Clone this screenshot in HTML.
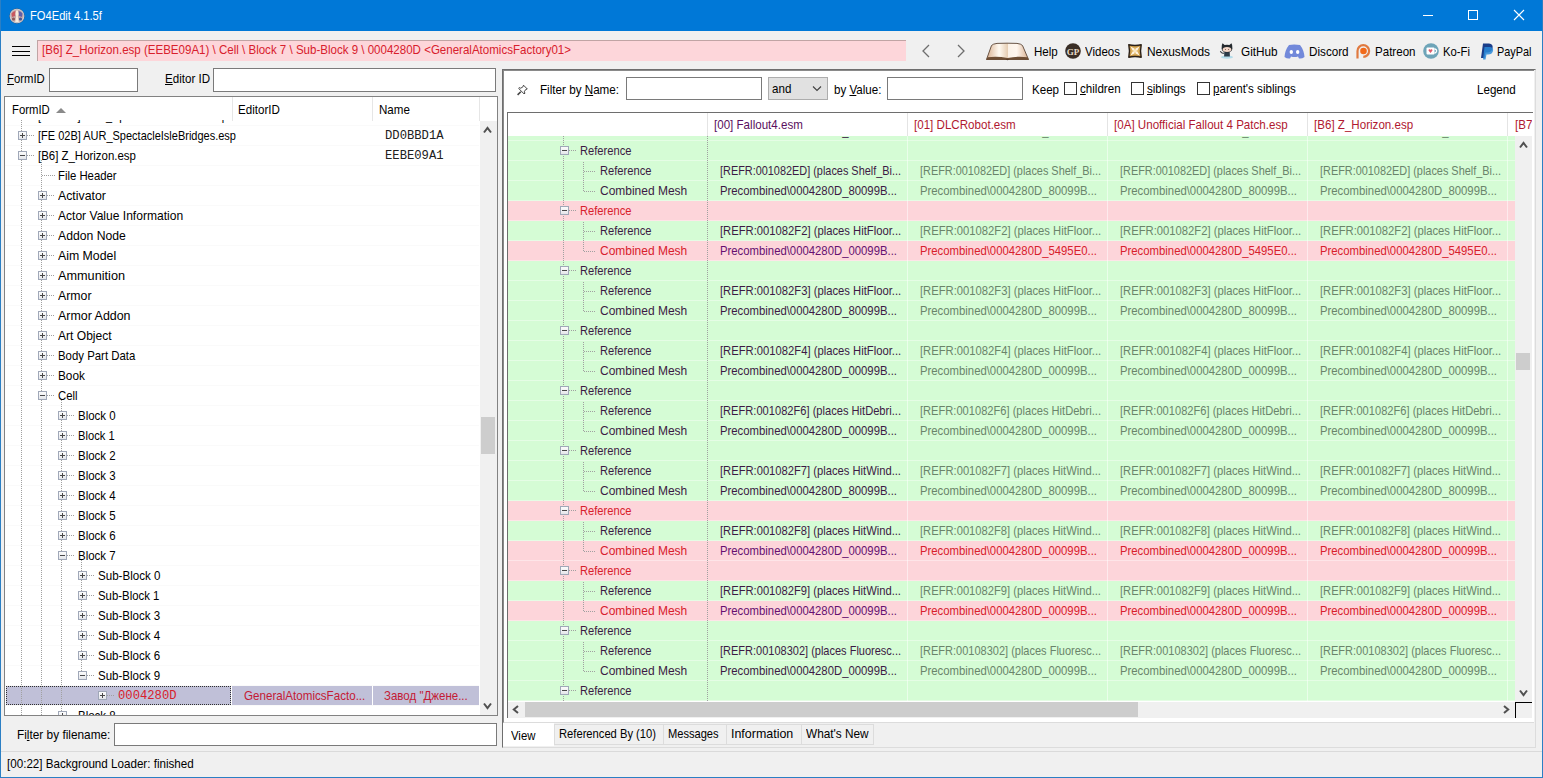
<!DOCTYPE html><html><head><meta charset="utf-8"><style>
*{box-sizing:border-box;margin:0;padding:0}
html,body{width:1543px;height:778px;overflow:hidden;background:#f0f0f0;font-family:"Liberation Sans",sans-serif;font-size:12.4px;color:#000}
.a{position:absolute}
.t{position:absolute;white-space:nowrap;line-height:14px;transform:scaleX(.935);transform-origin:0 0}
.m{font-family:"Liberation Mono",monospace;font-size:12.2px}
.t.m{transform:none}
.inp{position:absolute;background:#fff;border:1px solid #7a7a7a}
.u{text-decoration:underline;text-underline-offset:1px}
.vd{position:absolute;width:1px;background-image:linear-gradient(#a0a0a0 50%,transparent 50%);background-size:1px 2px}
.hd{position:absolute;height:1px;background-image:linear-gradient(90deg,#a0a0a0 50%,transparent 50%);background-size:2px 1px}
.bx{position:absolute;width:9px;height:9px;border:1px solid #a0a8b8;background:linear-gradient(#fcfcfc,#e4e6ea)}
.bx:before{content:"";position:absolute;left:1px;top:3px;width:5px;height:1px;background:#484848}
.bx.p:after{content:"";position:absolute;left:3px;top:1px;width:1px;height:5px;background:#484848}
.clip{position:absolute;overflow:hidden}
</style></head><body>
<div class="a" style="left:0;top:0;width:1543px;height:31px;background:#0078d7"></div>
<div class="a" style="left:0;top:0;width:1px;height:778px;background:#2b7fc4"></div>
<div class="a" style="left:1542px;top:0;width:1px;height:778px;background:#2b7fc4"></div>
<div class="a" style="left:0;top:777px;width:1543px;height:1px;background:#2b7fc4"></div>
<svg class="a" style="left:9px;top:8px" width="16" height="16" viewBox="0 0 16 16"><circle cx="8" cy="8" r="7.6" fill="#4a4a58"/><circle cx="8" cy="8" r="6.8" fill="#c8a8a8" stroke="#c8ccd4" stroke-width="1.1"/><path d="M2.5 5.5 Q4 3 6.5 3 L6 8 L3 9Z" fill="#c85860"/><path d="M13.5 5.5 Q12 3 9.5 3 L10 8 L13 9Z" fill="#6060a8"/><circle cx="4.5" cy="11" r="1.6" fill="#905858"/><circle cx="11.5" cy="11" r="1.6" fill="#485890"/><path d="M7 2.5 L9 2.5 L9.5 6 L8.8 8 L9.8 14 L6.2 14 L7.2 8 L6.5 6Z" fill="#f8ecdc"/></svg>
<div class="t" style="left:30px;top:9px;color:#fff;transform:scaleX(.9)">FO4Edit 4.1.5f</div>
<div class="a" style="left:1423px;top:15px;width:10px;height:1px;background:#fff"></div>
<div class="a" style="left:1468px;top:10px;width:10px;height:10px;border:1px solid #fff"></div>
<svg class="a" style="left:1513px;top:9px" width="12" height="12"><path d="M1 1L11 11M11 1L1 11" stroke="#fff" stroke-width="1.1"/></svg>
<div class="a" style="left:12px;top:46px;width:18px;height:1px;background:#000"></div>
<div class="a" style="left:12px;top:51px;width:18px;height:1px;background:#000"></div>
<div class="a" style="left:12px;top:55px;width:18px;height:1px;background:#000"></div>
<div class="a" style="left:37px;top:40px;width:869px;height:21px;background:#fdd6da;border-top:1px solid #c0a4a4;border-left:1px solid #c0a4a4"></div>
<div class="t" style="left:42px;top:43px;color:#d8202c;transform:scaleX(0.931)">[B6] Z_Horizon.esp (EEBE09A1) \ Cell \ Block 7 \ Sub-Block 9 \ 0004280D &lt;GeneralAtomicsFactory01&gt;</div>
<svg class="a" style="left:920px;top:43px" width="14" height="16"><path d="M9 2L3 8L9 14" fill="none" stroke="#6e6e6e" stroke-width="1.3"/></svg>
<svg class="a" style="left:954px;top:43px" width="14" height="16"><path d="M4 2L10 8L4 14" fill="none" stroke="#6e6e6e" stroke-width="1.3"/></svg>
<svg class="a" style="left:982px;top:38px" width="50" height="26" viewBox="0 0 50 26">
<defs><linearGradient id="bk" x1="0" x2="1" y1="0" y2="0"><stop offset="0" stop-color="#d8b090"/><stop offset=".3" stop-color="#fffaf2"/><stop offset=".5" stop-color="#e6ceb4"/><stop offset=".52" stop-color="#fbf2e8"/><stop offset=".72" stop-color="#fff6ee"/><stop offset="1" stop-color="#d8b090"/></linearGradient></defs>
<path d="M4.5 21.5 L9.5 7.5 Q11 5.8 15 5.4 L25 5.2 L35 5.4 Q39 5.8 40.5 7.5 L46.5 21.5 Z" fill="url(#bk)" stroke="#5a4434" stroke-width="0.9"/>
<path d="M4.2 21.8 L5.5 19.3 Q15 17.8 25.5 20 Q36 17.8 45.5 19.3 L46.8 21.8 Z" fill="#6e4e34"/>
<path d="M23.5 21.5 L25.5 22.3 L27.5 21.5 Z" fill="#3a2414"/>
</svg>
<div class="t" style="left:1034px;top:45px;transform:scaleX(0.934)">Help</div>
<svg class="a" style="left:1065px;top:43px" width="16" height="16"><circle cx="8" cy="8" r="7.8" fill="#3a2e26"/><text x="8" y="11.5" font-family="Liberation Serif" font-size="9" fill="#e8dcc8" text-anchor="middle" font-weight="bold">GP</text></svg>
<div class="t" style="left:1085px;top:45px;transform:scaleX(0.929)">Videos</div>
<svg class="a" style="left:1127px;top:43px" width="16" height="16" viewBox="0 0 16 16"><defs><radialGradient id="nx" cx=".5" cy=".5" r=".6"><stop offset="0" stop-color="#f8d890"/><stop offset="1" stop-color="#b88028"/></radialGradient></defs><path d="M1.8 1.8 Q8 3.2 14.2 1.8 Q12.8 8 14.2 14.2 Q8 12.8 1.8 14.2 Q3.2 8 1.8 1.8Z" fill="url(#nx)" stroke="#2a2018" stroke-width="1.4" stroke-linejoin="round"/><path d="M3.2 3.2 L7.2 5.6 L8 8 L5.6 7.2Z M12.8 3.2 L10.4 7.2 L8 8 L8.8 5.6Z M12.8 12.8 L8.8 10.4 L8 8 L10.4 8.8Z M3.2 12.8 L5.6 8.8 L8 8 L7.2 10.4Z" fill="#fff4e4"/></svg>
<div class="t" style="left:1147px;top:45px;transform:scaleX(0.963)">NexusMods</div>
<svg class="a" style="left:1219px;top:42px" width="16" height="17" viewBox="0 0 16 17"><ellipse cx="8" cy="15.2" rx="6" ry="1.6" fill="#b4dcea"/><path d="M5.3 10 L10.7 10 L10.9 14.6 L5.1 14.6Z" fill="#2c3c4a"/><path d="M5.2 11 Q2.2 11.8 1.4 9.2" fill="none" stroke="#30363c" stroke-width="1.1"/><path d="M2.6 6.8 Q2.2 3 3.6 1.3 L5.6 3 Q8 2.3 10.4 3 L12.4 1.3 Q13.8 3 13.4 6.8 Q13 10.5 8 10.5 Q3 10.5 2.6 6.8Z" fill="#24292e"/><ellipse cx="8" cy="7.4" rx="4.3" ry="2.5" fill="#f2d6c8"/><circle cx="6.4" cy="7.5" r=".55" fill="#6a4a40"/><circle cx="9.6" cy="7.5" r=".55" fill="#6a4a40"/></svg>
<div class="t" style="left:1241px;top:45px;transform:scaleX(0.949)">GitHub</div>
<svg class="a" style="left:1284px;top:44px" width="21" height="15" viewBox="0 0 21 15"><path d="M5 1 Q10 0 16 1 Q20 6 20.5 13 Q18 15 15 14.5 L14 12.5 Q10.5 13.5 7 12.5 L6 14.5 Q3 15 0.5 13 Q1 6 5 1 Z" fill="#7289da"/><ellipse cx="7.3" cy="8" rx="1.7" ry="1.9" fill="#fff"/><ellipse cx="13.7" cy="8" rx="1.7" ry="1.9" fill="#fff"/></svg>
<div class="t" style="left:1309px;top:45px;transform:scaleX(0.943)">Discord</div>
<svg class="a" style="left:1355px;top:43px" width="16" height="16"><path d="M2.5 15.5 L2.5 8 A5.8 5.8 0 1 1 8.3 13.8" fill="none" stroke="#e07a40" stroke-width="2.2"/><circle cx="8.5" cy="8" r="3.3" fill="#f26a1a"/></svg>
<div class="t" style="left:1375px;top:45px;transform:scaleX(0.933)">Patreon</div>
<svg class="a" style="left:1423px;top:43px" width="16" height="16"><circle cx="8" cy="8" r="7.8" fill="#6ea4b8"/><rect x="3.5" y="4.5" width="8" height="7" rx="1" fill="#fff"/><path d="M11.5 6 Q14 6 13.5 8.5 Q13 10 11.5 10" fill="none" stroke="#fff" stroke-width="1.3"/><path d="M7.5 10 L5.5 7.5 Q5.5 6 7 6.3 L7.5 7 L8 6.3 Q9.5 6 9.5 7.5 Z" fill="#e05a6a"/></svg>
<div class="t" style="left:1443px;top:45px;transform:scaleX(0.912)">Ko-Fi</div>
<svg class="a" style="left:1480px;top:43px" width="14" height="17" viewBox="0 0 14 17"><path d="M3 0.5 L9 0.5 Q13.5 1 12.5 5.5 Q11.5 9.5 7 9.5 L5.5 9.5 L4.5 15 L1 15 Z" fill="#1a3e8a"/><path d="M4.5 4 L10 4 Q13.8 4.5 13 8 Q12 11.5 8 11.5 L6.5 11.5 L5.5 16.5 L3 16.5 Z" fill="#2a8ad8" opacity="0.85"/></svg>
<div class="t" style="left:1497px;top:45px;transform:scaleX(0.879)">PayPal</div>
<div class="t" style="left:7px;top:72px;transform:scaleX(0.913)"><span class="u">F</span>ormID</div>
<div class="inp" style="left:49px;top:68px;width:89px;height:24px"></div>
<div class="t" style="left:165px;top:72px"><span class="u">E</span>ditor ID</div>
<div class="inp" style="left:213px;top:68px;width:283px;height:24px"></div>
<div class="a" style="left:4px;top:96px;width:494px;height:620px;background:#fff;border:1px solid #828282"></div>
<div class="t" style="left:12px;top:103px;transform:scaleX(0.913)">FormID</div>
<svg class="a" style="left:56px;top:107px" width="10" height="6"><path d="M0 6L5 1L10 6Z" fill="#8a8a8a"/></svg>
<div class="t" style="left:238px;top:103px">EditorID</div>
<div class="t" style="left:379px;top:103px">Name</div>
<div class="a" style="left:232px;top:97px;width:1px;height:24px;background:#e6e6e6"></div>
<div class="a" style="left:372px;top:97px;width:1px;height:24px;background:#e6e6e6"></div>
<div class="a" style="left:479px;top:97px;width:1px;height:24px;background:#e6e6e6"></div>
<div class="clip" style="left:5px;top:120px;width:474px;height:595px">
<div class="a" style="left:1px;top:566px;width:225px;height:19px;background:#c0c0d8;outline:1px dotted #303030;outline-offset:-1px"></div>
<div class="a" style="left:227px;top:566px;width:140px;height:19px;background:#c0c0d8"></div>
<div class="a" style="left:368px;top:566px;width:106px;height:19px;background:#c0c0d8"></div>
<div class="a" style="left:0;top:-15px;width:474px;height:1px;background:#fafafa"></div>
<div class="a" style="left:0;top:5px;width:474px;height:1px;background:#fafafa"></div>
<div class="a" style="left:0;top:25px;width:474px;height:1px;background:#fafafa"></div>
<div class="a" style="left:0;top:45px;width:474px;height:1px;background:#fafafa"></div>
<div class="a" style="left:0;top:65px;width:474px;height:1px;background:#fafafa"></div>
<div class="a" style="left:0;top:85px;width:474px;height:1px;background:#fafafa"></div>
<div class="a" style="left:0;top:105px;width:474px;height:1px;background:#fafafa"></div>
<div class="a" style="left:0;top:125px;width:474px;height:1px;background:#fafafa"></div>
<div class="a" style="left:0;top:145px;width:474px;height:1px;background:#fafafa"></div>
<div class="a" style="left:0;top:165px;width:474px;height:1px;background:#fafafa"></div>
<div class="a" style="left:0;top:185px;width:474px;height:1px;background:#fafafa"></div>
<div class="a" style="left:0;top:205px;width:474px;height:1px;background:#fafafa"></div>
<div class="a" style="left:0;top:225px;width:474px;height:1px;background:#fafafa"></div>
<div class="a" style="left:0;top:245px;width:474px;height:1px;background:#fafafa"></div>
<div class="a" style="left:0;top:265px;width:474px;height:1px;background:#fafafa"></div>
<div class="a" style="left:0;top:285px;width:474px;height:1px;background:#fafafa"></div>
<div class="a" style="left:0;top:305px;width:474px;height:1px;background:#fafafa"></div>
<div class="a" style="left:0;top:325px;width:474px;height:1px;background:#fafafa"></div>
<div class="a" style="left:0;top:345px;width:474px;height:1px;background:#fafafa"></div>
<div class="a" style="left:0;top:365px;width:474px;height:1px;background:#fafafa"></div>
<div class="a" style="left:0;top:385px;width:474px;height:1px;background:#fafafa"></div>
<div class="a" style="left:0;top:405px;width:474px;height:1px;background:#fafafa"></div>
<div class="a" style="left:0;top:425px;width:474px;height:1px;background:#fafafa"></div>
<div class="a" style="left:0;top:445px;width:474px;height:1px;background:#fafafa"></div>
<div class="a" style="left:0;top:465px;width:474px;height:1px;background:#fafafa"></div>
<div class="a" style="left:0;top:485px;width:474px;height:1px;background:#fafafa"></div>
<div class="a" style="left:0;top:505px;width:474px;height:1px;background:#fafafa"></div>
<div class="a" style="left:0;top:525px;width:474px;height:1px;background:#fafafa"></div>
<div class="a" style="left:0;top:545px;width:474px;height:1px;background:#fafafa"></div>
<div class="a" style="left:0;top:565px;width:474px;height:1px;background:#fafafa"></div>
<div class="a" style="left:0;top:585px;width:474px;height:1px;background:#fafafa"></div>
<div class="a" style="left:0;top:605px;width:474px;height:1px;background:#fafafa"></div>
<div class="vd" style="left:16px;top:0;height:595px"></div>
<div class="vd" style="left:36px;top:40px;height:560px"></div>
<div class="vd" style="left:56px;top:280px;height:320px"></div>
<div class="vd" style="left:76px;top:440px;height:115px"></div>
<div class="bx p" style="left:13px;top:-9px"></div>
<div class="hd" style="left:22px;top:-5px;width:8px"></div>
<div class="t" style="left:33px;top:-11px;transform:scaleX(0.881)">[FE 02A] AUR_SpectacleIsleDocks.esp</div>
<div class="t m" style="left:380px;top:-11px;color:#202020">DD0BBD19</div>
<div class="bx p" style="left:13px;top:11px"></div>
<div class="hd" style="left:22px;top:15px;width:8px"></div>
<div class="t" style="left:33px;top:9px;transform:scaleX(0.887)">[FE 02B] AUR_SpectacleIsleBridges.esp</div>
<div class="t m" style="left:380px;top:9px;color:#202020">DD0BBD1A</div>
<div class="bx " style="left:13px;top:31px"></div>
<div class="hd" style="left:22px;top:35px;width:8px"></div>
<div class="t" style="left:33px;top:29px;transform:scaleX(0.923)">[B6] Z_Horizon.esp</div>
<div class="t m" style="left:380px;top:29px;color:#202020">EEBE09A1</div>
<div class="hd" style="left:37px;top:55px;width:13px"></div>
<div class="t" style="left:53px;top:49px;transform:scaleX(0.915)">File Header</div>
<div class="bx p" style="left:33px;top:71px"></div>
<div class="hd" style="left:42px;top:75px;width:8px"></div>
<div class="t" style="left:53px;top:69px;transform:scaleX(0.992)">Activator</div>
<div class="bx p" style="left:33px;top:91px"></div>
<div class="hd" style="left:42px;top:95px;width:8px"></div>
<div class="t" style="left:53px;top:89px;transform:scaleX(0.973)">Actor Value Information</div>
<div class="bx p" style="left:33px;top:111px"></div>
<div class="hd" style="left:42px;top:115px;width:8px"></div>
<div class="t" style="left:53px;top:109px;transform:scaleX(0.984)">Addon Node</div>
<div class="bx p" style="left:33px;top:131px"></div>
<div class="hd" style="left:42px;top:135px;width:8px"></div>
<div class="t" style="left:53px;top:129px;transform:scaleX(0.993)">Aim Model</div>
<div class="bx p" style="left:33px;top:151px"></div>
<div class="hd" style="left:42px;top:155px;width:8px"></div>
<div class="t" style="left:53px;top:149px;transform:scaleX(1.024)">Ammunition</div>
<div class="bx p" style="left:33px;top:171px"></div>
<div class="hd" style="left:42px;top:175px;width:8px"></div>
<div class="t" style="left:53px;top:169px;transform:scaleX(0.993)">Armor</div>
<div class="bx p" style="left:33px;top:191px"></div>
<div class="hd" style="left:42px;top:195px;width:8px"></div>
<div class="t" style="left:53px;top:189px;transform:scaleX(1.003)">Armor Addon</div>
<div class="bx p" style="left:33px;top:211px"></div>
<div class="hd" style="left:42px;top:215px;width:8px"></div>
<div class="t" style="left:53px;top:209px;transform:scaleX(0.973)">Art Object</div>
<div class="bx p" style="left:33px;top:231px"></div>
<div class="hd" style="left:42px;top:235px;width:8px"></div>
<div class="t" style="left:53px;top:229px;transform:scaleX(0.920)">Body Part Data</div>
<div class="bx p" style="left:33px;top:251px"></div>
<div class="hd" style="left:42px;top:255px;width:8px"></div>
<div class="t" style="left:53px;top:249px;transform:scaleX(0.952)">Book</div>
<div class="bx " style="left:33px;top:271px"></div>
<div class="hd" style="left:42px;top:275px;width:8px"></div>
<div class="t" style="left:53px;top:269px;transform:scaleX(0.914)">Cell</div>
<div class="bx p" style="left:53px;top:291px"></div>
<div class="hd" style="left:62px;top:295px;width:8px"></div>
<div class="t" style="left:73px;top:289px;transform:scaleX(0.925)">Block 0</div>
<div class="bx p" style="left:53px;top:311px"></div>
<div class="hd" style="left:62px;top:315px;width:8px"></div>
<div class="t" style="left:73px;top:309px;transform:scaleX(0.901)">Block 1</div>
<div class="bx p" style="left:53px;top:331px"></div>
<div class="hd" style="left:62px;top:335px;width:8px"></div>
<div class="t" style="left:73px;top:329px;transform:scaleX(0.925)">Block 2</div>
<div class="bx p" style="left:53px;top:351px"></div>
<div class="hd" style="left:62px;top:355px;width:8px"></div>
<div class="t" style="left:73px;top:349px;transform:scaleX(0.925)">Block 3</div>
<div class="bx p" style="left:53px;top:371px"></div>
<div class="hd" style="left:62px;top:375px;width:8px"></div>
<div class="t" style="left:73px;top:369px;transform:scaleX(0.925)">Block 4</div>
<div class="bx p" style="left:53px;top:391px"></div>
<div class="hd" style="left:62px;top:395px;width:8px"></div>
<div class="t" style="left:73px;top:389px;transform:scaleX(0.925)">Block 5</div>
<div class="bx p" style="left:53px;top:411px"></div>
<div class="hd" style="left:62px;top:415px;width:8px"></div>
<div class="t" style="left:73px;top:409px;transform:scaleX(0.925)">Block 6</div>
<div class="bx " style="left:53px;top:431px"></div>
<div class="hd" style="left:62px;top:435px;width:8px"></div>
<div class="t" style="left:73px;top:429px;transform:scaleX(0.925)">Block 7</div>
<div class="bx p" style="left:73px;top:451px"></div>
<div class="hd" style="left:82px;top:455px;width:8px"></div>
<div class="t" style="left:93px;top:449px;transform:scaleX(0.935)">Sub-Block 0</div>
<div class="bx p" style="left:73px;top:471px"></div>
<div class="hd" style="left:82px;top:475px;width:8px"></div>
<div class="t" style="left:93px;top:469px;transform:scaleX(0.919)">Sub-Block 1</div>
<div class="bx p" style="left:73px;top:491px"></div>
<div class="hd" style="left:82px;top:495px;width:8px"></div>
<div class="t" style="left:93px;top:489px;transform:scaleX(0.931)">Sub-Block 3</div>
<div class="bx p" style="left:73px;top:511px"></div>
<div class="hd" style="left:82px;top:515px;width:8px"></div>
<div class="t" style="left:93px;top:509px;transform:scaleX(0.931)">Sub-Block 4</div>
<div class="bx p" style="left:73px;top:531px"></div>
<div class="hd" style="left:82px;top:535px;width:8px"></div>
<div class="t" style="left:93px;top:529px;transform:scaleX(0.931)">Sub-Block 6</div>
<div class="bx " style="left:73px;top:551px"></div>
<div class="hd" style="left:82px;top:555px;width:8px"></div>
<div class="t" style="left:93px;top:549px;transform:scaleX(0.931)">Sub-Block 9</div>
<div class="bx p" style="left:93px;top:571px"></div>
<div class="hd" style="left:102px;top:575px;width:8px"></div>
<div class="t m" style="left:113px;top:569px;color:#d8202c">0004280D</div>
<div class="t" style="left:239px;top:569px;color:#c41a34;transform:scaleX(0.937)">GeneralAtomicsFacto...</div>
<div class="t" style="left:379px;top:569px;color:#c41a34;transform:scaleX(0.929)">Завод "Джене...</div>
<div class="bx p" style="left:53px;top:591px"></div>
<div class="hd" style="left:62px;top:595px;width:8px"></div>
<div class="t" style="left:73px;top:589px;transform:scaleX(0.925)">Block 8</div>
</div>
<div class="a" style="left:480px;top:121px;width:17px;height:594px;background:#f0f0f0"></div>
<svg class="a" style="left:483px;top:126px" width="9" height="8"><path d="M1 6.5L4.5 2L8 6.5" fill="none" stroke="#505050" stroke-width="2"/></svg>
<svg class="a" style="left:483px;top:702px" width="9" height="8"><path d="M1 1.5L4.5 6L8 1.5" fill="none" stroke="#505050" stroke-width="2"/></svg>
<div class="a" style="left:481px;top:417px;width:14px;height:37px;background:#cdcdcd"></div>
<div class="t" style="left:17px;top:728px;transform:scaleX(0.955)">Fi<span class="u">l</span>ter by filename:</div>
<div class="inp" style="left:114px;top:723px;width:383px;height:23px"></div>
<div class="a" style="left:502px;top:69px;width:1034px;height:679px;background:#f0f0f0;border-left:1px solid #6e6e6e;border-top:1px solid #6e6e6e;border-right:1px solid #dcdcdc;border-bottom:1px solid #dcdcdc"></div>
<div class="a" style="left:503px;top:70px;width:1031px;height:653px;background:#fff;border-bottom:1px solid #dcdcdc;border-left:1px solid #8a8a8a;border-top:1px solid #8a8a8a"></div>
<svg class="a" style="left:516px;top:84px" width="13" height="12"><path d="M7.5 1.2L11.3 5L9.6 5.6L8.3 7.8L9 9.2L8 9.8L2.7 4.5L3.3 3.6L4.7 4.2L6.9 2.9Z" fill="none" stroke="#333" stroke-width="0.9" stroke-linejoin="round"/><path d="M4.8 7.7L1.6 10.9" stroke="#444" stroke-width="1.6"/></svg>
<div class="t" style="left:540px;top:83px;transform:scaleX(0.941)">Filter by <span class="u">N</span>ame:</div>
<div class="inp" style="left:626px;top:77px;width:136px;height:23px"></div>
<div class="a" style="left:768px;top:77px;width:60px;height:23px;background:#e1e1e1;border:1px solid #adadad"></div>
<div class="t" style="left:772px;top:82px">and</div>
<svg class="a" style="left:812px;top:85px" width="10" height="7"><path d="M1 1.5L5 5.5L9 1.5" fill="none" stroke="#404040" stroke-width="1.1"/></svg>
<div class="t" style="left:834px;top:83px">by <span class="u">V</span>alue:</div>
<div class="inp" style="left:887px;top:77px;width:136px;height:23px"></div>
<div class="t" style="left:1032px;top:83px">Keep</div>
<div class="a" style="left:1064px;top:82px;width:13px;height:13px;border:1px solid #333;background:#fff"></div>
<div class="t" style="left:1080px;top:82px"><span class="u">c</span>hildren</div>
<div class="a" style="left:1131px;top:82px;width:13px;height:13px;border:1px solid #333;background:#fff"></div>
<div class="t" style="left:1147px;top:82px"><span class="u">s</span>iblings</div>
<div class="a" style="left:1197px;top:82px;width:13px;height:13px;border:1px solid #333;background:#fff"></div>
<div class="t" style="left:1213px;top:82px"><span class="u">p</span>arent's siblings</div>
<div class="t" style="left:1477px;top:83px">Legend</div>
<div class="a" style="left:507px;top:112px;width:1026px;height:606px;border-left:1px solid #6e6e6e;border-top:1px solid #6e6e6e;background:#fff"></div>
<div class="clip" style="left:508px;top:113px;width:1007px;height:589px">
<div class="clip" style="left:0;top:23px;width:1007px;height:566px">
<div class="a" style="left:0;top:-15px;width:1007px;height:20px;background:#d5fcd5"></div>
<div class="a" style="left:0;top:4px;width:1007px;height:1px;background:rgba(255,255,255,.38)"></div>
<div class="a" style="left:0;top:5px;width:1007px;height:20px;background:#d5fcd5"></div>
<div class="a" style="left:0;top:24px;width:1007px;height:1px;background:rgba(255,255,255,.38)"></div>
<div class="a" style="left:0;top:25px;width:1007px;height:20px;background:#d5fcd5"></div>
<div class="a" style="left:0;top:44px;width:1007px;height:1px;background:rgba(255,255,255,.38)"></div>
<div class="a" style="left:0;top:45px;width:1007px;height:20px;background:#d5fcd5"></div>
<div class="a" style="left:0;top:64px;width:1007px;height:1px;background:rgba(255,255,255,.38)"></div>
<div class="a" style="left:0;top:65px;width:1007px;height:20px;background:#fdd5da"></div>
<div class="a" style="left:0;top:84px;width:1007px;height:1px;background:rgba(255,255,255,.38)"></div>
<div class="a" style="left:0;top:85px;width:1007px;height:20px;background:#d5fcd5"></div>
<div class="a" style="left:0;top:104px;width:1007px;height:1px;background:rgba(255,255,255,.38)"></div>
<div class="a" style="left:0;top:105px;width:1007px;height:20px;background:#fdd5da"></div>
<div class="a" style="left:0;top:124px;width:1007px;height:1px;background:rgba(255,255,255,.38)"></div>
<div class="a" style="left:0;top:125px;width:1007px;height:20px;background:#d5fcd5"></div>
<div class="a" style="left:0;top:144px;width:1007px;height:1px;background:rgba(255,255,255,.38)"></div>
<div class="a" style="left:0;top:145px;width:1007px;height:20px;background:#d5fcd5"></div>
<div class="a" style="left:0;top:164px;width:1007px;height:1px;background:rgba(255,255,255,.38)"></div>
<div class="a" style="left:0;top:165px;width:1007px;height:20px;background:#d5fcd5"></div>
<div class="a" style="left:0;top:184px;width:1007px;height:1px;background:rgba(255,255,255,.38)"></div>
<div class="a" style="left:0;top:185px;width:1007px;height:20px;background:#d5fcd5"></div>
<div class="a" style="left:0;top:204px;width:1007px;height:1px;background:rgba(255,255,255,.38)"></div>
<div class="a" style="left:0;top:205px;width:1007px;height:20px;background:#d5fcd5"></div>
<div class="a" style="left:0;top:224px;width:1007px;height:1px;background:rgba(255,255,255,.38)"></div>
<div class="a" style="left:0;top:225px;width:1007px;height:20px;background:#d5fcd5"></div>
<div class="a" style="left:0;top:244px;width:1007px;height:1px;background:rgba(255,255,255,.38)"></div>
<div class="a" style="left:0;top:245px;width:1007px;height:20px;background:#d5fcd5"></div>
<div class="a" style="left:0;top:264px;width:1007px;height:1px;background:rgba(255,255,255,.38)"></div>
<div class="a" style="left:0;top:265px;width:1007px;height:20px;background:#d5fcd5"></div>
<div class="a" style="left:0;top:284px;width:1007px;height:1px;background:rgba(255,255,255,.38)"></div>
<div class="a" style="left:0;top:285px;width:1007px;height:20px;background:#d5fcd5"></div>
<div class="a" style="left:0;top:304px;width:1007px;height:1px;background:rgba(255,255,255,.38)"></div>
<div class="a" style="left:0;top:305px;width:1007px;height:20px;background:#d5fcd5"></div>
<div class="a" style="left:0;top:324px;width:1007px;height:1px;background:rgba(255,255,255,.38)"></div>
<div class="a" style="left:0;top:325px;width:1007px;height:20px;background:#d5fcd5"></div>
<div class="a" style="left:0;top:344px;width:1007px;height:1px;background:rgba(255,255,255,.38)"></div>
<div class="a" style="left:0;top:345px;width:1007px;height:20px;background:#d5fcd5"></div>
<div class="a" style="left:0;top:364px;width:1007px;height:1px;background:rgba(255,255,255,.38)"></div>
<div class="a" style="left:0;top:365px;width:1007px;height:20px;background:#fdd5da"></div>
<div class="a" style="left:0;top:384px;width:1007px;height:1px;background:rgba(255,255,255,.38)"></div>
<div class="a" style="left:0;top:385px;width:1007px;height:20px;background:#d5fcd5"></div>
<div class="a" style="left:0;top:404px;width:1007px;height:1px;background:rgba(255,255,255,.38)"></div>
<div class="a" style="left:0;top:405px;width:1007px;height:20px;background:#fdd5da"></div>
<div class="a" style="left:0;top:424px;width:1007px;height:1px;background:rgba(255,255,255,.38)"></div>
<div class="a" style="left:0;top:425px;width:1007px;height:20px;background:#fdd5da"></div>
<div class="a" style="left:0;top:444px;width:1007px;height:1px;background:rgba(255,255,255,.38)"></div>
<div class="a" style="left:0;top:445px;width:1007px;height:20px;background:#d5fcd5"></div>
<div class="a" style="left:0;top:464px;width:1007px;height:1px;background:rgba(255,255,255,.38)"></div>
<div class="a" style="left:0;top:465px;width:1007px;height:20px;background:#fdd5da"></div>
<div class="a" style="left:0;top:484px;width:1007px;height:1px;background:rgba(255,255,255,.38)"></div>
<div class="a" style="left:0;top:485px;width:1007px;height:20px;background:#d5fcd5"></div>
<div class="a" style="left:0;top:504px;width:1007px;height:1px;background:rgba(255,255,255,.38)"></div>
<div class="a" style="left:0;top:505px;width:1007px;height:20px;background:#d5fcd5"></div>
<div class="a" style="left:0;top:524px;width:1007px;height:1px;background:rgba(255,255,255,.38)"></div>
<div class="a" style="left:0;top:525px;width:1007px;height:20px;background:#d5fcd5"></div>
<div class="a" style="left:0;top:544px;width:1007px;height:1px;background:rgba(255,255,255,.38)"></div>
<div class="a" style="left:0;top:545px;width:1007px;height:20px;background:#d5fcd5"></div>
<div class="a" style="left:0;top:564px;width:1007px;height:1px;background:rgba(255,255,255,.38)"></div>
<div class="vd" style="left:55px;top:0px;height:566px"></div>
<div class="vd" style="left:75px;top:26px;height:30px"></div>
<div class="vd" style="left:75px;top:86px;height:30px"></div>
<div class="vd" style="left:75px;top:146px;height:30px"></div>
<div class="vd" style="left:75px;top:206px;height:30px"></div>
<div class="vd" style="left:75px;top:266px;height:30px"></div>
<div class="vd" style="left:75px;top:326px;height:30px"></div>
<div class="vd" style="left:75px;top:386px;height:30px"></div>
<div class="vd" style="left:75px;top:446px;height:30px"></div>
<div class="vd" style="left:75px;top:506px;height:30px"></div>
<div class="vd" style="left:199px;top:0px;height:566px"></div>
<div class="a" style="left:399px;top:0px;width:1px;height:566px;background:rgba(255,255,255,.5)"></div>
<div class="a" style="left:599px;top:0px;width:1px;height:566px;background:rgba(255,255,255,.5)"></div>
<div class="a" style="left:799px;top:0px;width:1px;height:566px;background:rgba(255,255,255,.5)"></div>
<div class="a" style="left:999px;top:0px;width:1px;height:566px;background:rgba(255,255,255,.5)"></div>
<div class="hd" style="left:76px;top:-5px;width:12px"></div>
<div class="t" style="left:92px;top:-12px;color:#3c1a44;transform:scaleX(0.967)">Combined Mesh</div>
<div class="t" style="left:212px;top:-12px;color:#3c1a44;transform:scaleX(0.914)">Precombined\0004280D_80099B...</div>
<div class="t" style="left:412px;top:-12px;color:#6a846a;transform:scaleX(0.914)">Precombined\0004280D_80099B...</div>
<div class="t" style="left:612px;top:-12px;color:#6a846a;transform:scaleX(0.914)">Precombined\0004280D_80099B...</div>
<div class="t" style="left:812px;top:-12px;color:#6a846a;transform:scaleX(0.914)">Precombined\0004280D_80099B...</div>
<div class="bx" style="left:52px;top:10px"></div>
<div class="hd" style="left:61px;top:14px;width:7px"></div>
<div class="t" style="left:72px;top:8px;color:#3c1a44;transform:scaleX(0.899)">Reference</div>
<div class="hd" style="left:76px;top:35px;width:12px"></div>
<div class="t" style="left:92px;top:28px;color:#3c1a44;transform:scaleX(0.899)">Reference</div>
<div class="t" style="left:212px;top:28px;color:#3c1a44;transform:scaleX(0.879)">[REFR:001082ED] (places Shelf_Bi...</div>
<div class="t" style="left:412px;top:28px;color:#6a846a;transform:scaleX(0.879)">[REFR:001082ED] (places Shelf_Bi...</div>
<div class="t" style="left:612px;top:28px;color:#6a846a;transform:scaleX(0.879)">[REFR:001082ED] (places Shelf_Bi...</div>
<div class="t" style="left:812px;top:28px;color:#6a846a;transform:scaleX(0.879)">[REFR:001082ED] (places Shelf_Bi...</div>
<div class="hd" style="left:76px;top:55px;width:12px"></div>
<div class="t" style="left:92px;top:48px;color:#3c1a44;transform:scaleX(0.967)">Combined Mesh</div>
<div class="t" style="left:212px;top:48px;color:#3c1a44;transform:scaleX(0.914)">Precombined\0004280D_80099B...</div>
<div class="t" style="left:412px;top:48px;color:#6a846a;transform:scaleX(0.914)">Precombined\0004280D_80099B...</div>
<div class="t" style="left:612px;top:48px;color:#6a846a;transform:scaleX(0.914)">Precombined\0004280D_80099B...</div>
<div class="t" style="left:812px;top:48px;color:#6a846a;transform:scaleX(0.914)">Precombined\0004280D_80099B...</div>
<div class="bx" style="left:52px;top:70px"></div>
<div class="hd" style="left:61px;top:74px;width:7px"></div>
<div class="t" style="left:72px;top:68px;color:#d8202c;transform:scaleX(0.899)">Reference</div>
<div class="hd" style="left:76px;top:95px;width:12px"></div>
<div class="t" style="left:92px;top:88px;color:#3c1a44;transform:scaleX(0.899)">Reference</div>
<div class="t" style="left:212px;top:88px;color:#3c1a44;transform:scaleX(0.907)">[REFR:001082F2] (places HitFloor...</div>
<div class="t" style="left:412px;top:88px;color:#6a846a;transform:scaleX(0.907)">[REFR:001082F2] (places HitFloor...</div>
<div class="t" style="left:612px;top:88px;color:#6a846a;transform:scaleX(0.907)">[REFR:001082F2] (places HitFloor...</div>
<div class="t" style="left:812px;top:88px;color:#6a846a;transform:scaleX(0.907)">[REFR:001082F2] (places HitFloor...</div>
<div class="hd" style="left:76px;top:115px;width:12px"></div>
<div class="t" style="left:92px;top:108px;color:#d8202c;transform:scaleX(0.967)">Combined Mesh</div>
<div class="t" style="left:212px;top:108px;color:#661070;transform:scaleX(0.914)">Precombined\0004280D_00099B...</div>
<div class="t" style="left:412px;top:108px;color:#d8202c;transform:scaleX(0.914)">Precombined\0004280D_5495E0...</div>
<div class="t" style="left:612px;top:108px;color:#d8202c;transform:scaleX(0.914)">Precombined\0004280D_5495E0...</div>
<div class="t" style="left:812px;top:108px;color:#d8202c;transform:scaleX(0.914)">Precombined\0004280D_5495E0...</div>
<div class="bx" style="left:52px;top:130px"></div>
<div class="hd" style="left:61px;top:134px;width:7px"></div>
<div class="t" style="left:72px;top:128px;color:#3c1a44;transform:scaleX(0.899)">Reference</div>
<div class="hd" style="left:76px;top:155px;width:12px"></div>
<div class="t" style="left:92px;top:148px;color:#3c1a44;transform:scaleX(0.899)">Reference</div>
<div class="t" style="left:212px;top:148px;color:#3c1a44;transform:scaleX(0.907)">[REFR:001082F3] (places HitFloor...</div>
<div class="t" style="left:412px;top:148px;color:#6a846a;transform:scaleX(0.907)">[REFR:001082F3] (places HitFloor...</div>
<div class="t" style="left:612px;top:148px;color:#6a846a;transform:scaleX(0.907)">[REFR:001082F3] (places HitFloor...</div>
<div class="t" style="left:812px;top:148px;color:#6a846a;transform:scaleX(0.907)">[REFR:001082F3] (places HitFloor...</div>
<div class="hd" style="left:76px;top:175px;width:12px"></div>
<div class="t" style="left:92px;top:168px;color:#3c1a44;transform:scaleX(0.967)">Combined Mesh</div>
<div class="t" style="left:212px;top:168px;color:#3c1a44;transform:scaleX(0.914)">Precombined\0004280D_80099B...</div>
<div class="t" style="left:412px;top:168px;color:#6a846a;transform:scaleX(0.914)">Precombined\0004280D_80099B...</div>
<div class="t" style="left:612px;top:168px;color:#6a846a;transform:scaleX(0.914)">Precombined\0004280D_80099B...</div>
<div class="t" style="left:812px;top:168px;color:#6a846a;transform:scaleX(0.914)">Precombined\0004280D_80099B...</div>
<div class="bx" style="left:52px;top:190px"></div>
<div class="hd" style="left:61px;top:194px;width:7px"></div>
<div class="t" style="left:72px;top:188px;color:#3c1a44;transform:scaleX(0.899)">Reference</div>
<div class="hd" style="left:76px;top:215px;width:12px"></div>
<div class="t" style="left:92px;top:208px;color:#3c1a44;transform:scaleX(0.899)">Reference</div>
<div class="t" style="left:212px;top:208px;color:#3c1a44;transform:scaleX(0.907)">[REFR:001082F4] (places HitFloor...</div>
<div class="t" style="left:412px;top:208px;color:#6a846a;transform:scaleX(0.907)">[REFR:001082F4] (places HitFloor...</div>
<div class="t" style="left:612px;top:208px;color:#6a846a;transform:scaleX(0.907)">[REFR:001082F4] (places HitFloor...</div>
<div class="t" style="left:812px;top:208px;color:#6a846a;transform:scaleX(0.907)">[REFR:001082F4] (places HitFloor...</div>
<div class="hd" style="left:76px;top:235px;width:12px"></div>
<div class="t" style="left:92px;top:228px;color:#3c1a44;transform:scaleX(0.967)">Combined Mesh</div>
<div class="t" style="left:212px;top:228px;color:#3c1a44;transform:scaleX(0.914)">Precombined\0004280D_00099B...</div>
<div class="t" style="left:412px;top:228px;color:#6a846a;transform:scaleX(0.914)">Precombined\0004280D_00099B...</div>
<div class="t" style="left:612px;top:228px;color:#6a846a;transform:scaleX(0.914)">Precombined\0004280D_00099B...</div>
<div class="t" style="left:812px;top:228px;color:#6a846a;transform:scaleX(0.914)">Precombined\0004280D_00099B...</div>
<div class="bx" style="left:52px;top:250px"></div>
<div class="hd" style="left:61px;top:254px;width:7px"></div>
<div class="t" style="left:72px;top:248px;color:#3c1a44;transform:scaleX(0.899)">Reference</div>
<div class="hd" style="left:76px;top:275px;width:12px"></div>
<div class="t" style="left:92px;top:268px;color:#3c1a44;transform:scaleX(0.899)">Reference</div>
<div class="t" style="left:212px;top:268px;color:#3c1a44;transform:scaleX(0.897)">[REFR:001082F6] (places HitDebri...</div>
<div class="t" style="left:412px;top:268px;color:#6a846a;transform:scaleX(0.897)">[REFR:001082F6] (places HitDebri...</div>
<div class="t" style="left:612px;top:268px;color:#6a846a;transform:scaleX(0.897)">[REFR:001082F6] (places HitDebri...</div>
<div class="t" style="left:812px;top:268px;color:#6a846a;transform:scaleX(0.897)">[REFR:001082F6] (places HitDebri...</div>
<div class="hd" style="left:76px;top:295px;width:12px"></div>
<div class="t" style="left:92px;top:288px;color:#3c1a44;transform:scaleX(0.967)">Combined Mesh</div>
<div class="t" style="left:212px;top:288px;color:#3c1a44;transform:scaleX(0.914)">Precombined\0004280D_00099B...</div>
<div class="t" style="left:412px;top:288px;color:#6a846a;transform:scaleX(0.914)">Precombined\0004280D_00099B...</div>
<div class="t" style="left:612px;top:288px;color:#6a846a;transform:scaleX(0.914)">Precombined\0004280D_00099B...</div>
<div class="t" style="left:812px;top:288px;color:#6a846a;transform:scaleX(0.914)">Precombined\0004280D_00099B...</div>
<div class="bx" style="left:52px;top:310px"></div>
<div class="hd" style="left:61px;top:314px;width:7px"></div>
<div class="t" style="left:72px;top:308px;color:#3c1a44;transform:scaleX(0.899)">Reference</div>
<div class="hd" style="left:76px;top:335px;width:12px"></div>
<div class="t" style="left:92px;top:328px;color:#3c1a44;transform:scaleX(0.899)">Reference</div>
<div class="t" style="left:212px;top:328px;color:#3c1a44;transform:scaleX(0.903)">[REFR:001082F7] (places HitWind...</div>
<div class="t" style="left:412px;top:328px;color:#6a846a;transform:scaleX(0.903)">[REFR:001082F7] (places HitWind...</div>
<div class="t" style="left:612px;top:328px;color:#6a846a;transform:scaleX(0.903)">[REFR:001082F7] (places HitWind...</div>
<div class="t" style="left:812px;top:328px;color:#6a846a;transform:scaleX(0.903)">[REFR:001082F7] (places HitWind...</div>
<div class="hd" style="left:76px;top:355px;width:12px"></div>
<div class="t" style="left:92px;top:348px;color:#3c1a44;transform:scaleX(0.967)">Combined Mesh</div>
<div class="t" style="left:212px;top:348px;color:#3c1a44;transform:scaleX(0.914)">Precombined\0004280D_80099B...</div>
<div class="t" style="left:412px;top:348px;color:#6a846a;transform:scaleX(0.914)">Precombined\0004280D_80099B...</div>
<div class="t" style="left:612px;top:348px;color:#6a846a;transform:scaleX(0.914)">Precombined\0004280D_80099B...</div>
<div class="t" style="left:812px;top:348px;color:#6a846a;transform:scaleX(0.914)">Precombined\0004280D_80099B...</div>
<div class="bx" style="left:52px;top:370px"></div>
<div class="hd" style="left:61px;top:374px;width:7px"></div>
<div class="t" style="left:72px;top:368px;color:#d8202c;transform:scaleX(0.899)">Reference</div>
<div class="hd" style="left:76px;top:395px;width:12px"></div>
<div class="t" style="left:92px;top:388px;color:#3c1a44;transform:scaleX(0.899)">Reference</div>
<div class="t" style="left:212px;top:388px;color:#3c1a44;transform:scaleX(0.903)">[REFR:001082F8] (places HitWind...</div>
<div class="t" style="left:412px;top:388px;color:#6a846a;transform:scaleX(0.903)">[REFR:001082F8] (places HitWind...</div>
<div class="t" style="left:612px;top:388px;color:#6a846a;transform:scaleX(0.903)">[REFR:001082F8] (places HitWind...</div>
<div class="t" style="left:812px;top:388px;color:#6a846a;transform:scaleX(0.903)">[REFR:001082F8] (places HitWind...</div>
<div class="hd" style="left:76px;top:415px;width:12px"></div>
<div class="t" style="left:92px;top:408px;color:#d8202c;transform:scaleX(0.967)">Combined Mesh</div>
<div class="t" style="left:212px;top:408px;color:#661070;transform:scaleX(0.914)">Precombined\0004280D_00099B...</div>
<div class="t" style="left:412px;top:408px;color:#d8202c;transform:scaleX(0.914)">Precombined\0004280D_00099B...</div>
<div class="t" style="left:612px;top:408px;color:#d8202c;transform:scaleX(0.914)">Precombined\0004280D_00099B...</div>
<div class="t" style="left:812px;top:408px;color:#d8202c;transform:scaleX(0.914)">Precombined\0004280D_00099B...</div>
<div class="bx" style="left:52px;top:430px"></div>
<div class="hd" style="left:61px;top:434px;width:7px"></div>
<div class="t" style="left:72px;top:428px;color:#d8202c;transform:scaleX(0.899)">Reference</div>
<div class="hd" style="left:76px;top:455px;width:12px"></div>
<div class="t" style="left:92px;top:448px;color:#3c1a44;transform:scaleX(0.899)">Reference</div>
<div class="t" style="left:212px;top:448px;color:#3c1a44;transform:scaleX(0.903)">[REFR:001082F9] (places HitWind...</div>
<div class="t" style="left:412px;top:448px;color:#6a846a;transform:scaleX(0.903)">[REFR:001082F9] (places HitWind...</div>
<div class="t" style="left:612px;top:448px;color:#6a846a;transform:scaleX(0.903)">[REFR:001082F9] (places HitWind...</div>
<div class="t" style="left:812px;top:448px;color:#6a846a;transform:scaleX(0.903)">[REFR:001082F9] (places HitWind...</div>
<div class="hd" style="left:76px;top:475px;width:12px"></div>
<div class="t" style="left:92px;top:468px;color:#d8202c;transform:scaleX(0.967)">Combined Mesh</div>
<div class="t" style="left:212px;top:468px;color:#661070;transform:scaleX(0.914)">Precombined\0004280D_00099B...</div>
<div class="t" style="left:412px;top:468px;color:#d8202c;transform:scaleX(0.914)">Precombined\0004280D_00099B...</div>
<div class="t" style="left:612px;top:468px;color:#d8202c;transform:scaleX(0.914)">Precombined\0004280D_00099B...</div>
<div class="t" style="left:812px;top:468px;color:#d8202c;transform:scaleX(0.914)">Precombined\0004280D_00099B...</div>
<div class="bx" style="left:52px;top:490px"></div>
<div class="hd" style="left:61px;top:494px;width:7px"></div>
<div class="t" style="left:72px;top:488px;color:#3c1a44;transform:scaleX(0.899)">Reference</div>
<div class="hd" style="left:76px;top:515px;width:12px"></div>
<div class="t" style="left:92px;top:508px;color:#3c1a44;transform:scaleX(0.899)">Reference</div>
<div class="t" style="left:212px;top:508px;color:#3c1a44;transform:scaleX(0.888)">[REFR:00108302] (places Fluoresc...</div>
<div class="t" style="left:412px;top:508px;color:#6a846a;transform:scaleX(0.888)">[REFR:00108302] (places Fluoresc...</div>
<div class="t" style="left:612px;top:508px;color:#6a846a;transform:scaleX(0.888)">[REFR:00108302] (places Fluoresc...</div>
<div class="t" style="left:812px;top:508px;color:#6a846a;transform:scaleX(0.888)">[REFR:00108302] (places Fluoresc...</div>
<div class="hd" style="left:76px;top:535px;width:12px"></div>
<div class="t" style="left:92px;top:528px;color:#3c1a44;transform:scaleX(0.967)">Combined Mesh</div>
<div class="t" style="left:212px;top:528px;color:#3c1a44;transform:scaleX(0.914)">Precombined\0004280D_00099B...</div>
<div class="t" style="left:412px;top:528px;color:#6a846a;transform:scaleX(0.914)">Precombined\0004280D_00099B...</div>
<div class="t" style="left:612px;top:528px;color:#6a846a;transform:scaleX(0.914)">Precombined\0004280D_00099B...</div>
<div class="t" style="left:812px;top:528px;color:#6a846a;transform:scaleX(0.914)">Precombined\0004280D_00099B...</div>
<div class="bx" style="left:52px;top:550px"></div>
<div class="hd" style="left:61px;top:554px;width:7px"></div>
<div class="t" style="left:72px;top:548px;color:#3c1a44;transform:scaleX(0.899)">Reference</div>
</div>
</div>
<div class="clip" style="left:508px;top:113px;width:1024px;height:23px;background:#fff"><div class="t" style="left:206px;top:5px;color:#5a1060">[00] Fallout4.esm</div><div class="t" style="left:406px;top:5px;color:#b01830">[01] DLCRobot.esm</div><div class="t" style="left:606px;top:5px;color:#b01830">[0A] Unofficial Fallout 4 Patch.esp</div><div class="t" style="left:806px;top:5px;color:#b01830">[B6] Z_Horizon.esp</div><div class="t" style="left:1007px;top:5px;color:#b01830">[B7</div><div class="a" style="left:199px;top:0;width:1px;height:23px;background:#e4e4e4"></div><div class="a" style="left:399px;top:0;width:1px;height:23px;background:#e4e4e4"></div><div class="a" style="left:599px;top:0;width:1px;height:23px;background:#e4e4e4"></div><div class="a" style="left:799px;top:0;width:1px;height:23px;background:#e4e4e4"></div><div class="a" style="left:999px;top:0;width:1px;height:23px;background:#e4e4e4"></div></div>
<div class="a" style="left:1515px;top:136px;width:17px;height:566px;background:#f0f0f0"></div>
<svg class="a" style="left:1519px;top:141px" width="9" height="8"><path d="M1 6.5L4.5 2L8 6.5" fill="none" stroke="#505050" stroke-width="2"/></svg>
<svg class="a" style="left:1519px;top:689px" width="9" height="8"><path d="M1 1.5L4.5 6L8 1.5" fill="none" stroke="#505050" stroke-width="2"/></svg>
<div class="a" style="left:1516px;top:353px;width:14px;height:17px;background:#cdcdcd"></div>
<div class="a" style="left:508px;top:702px;width:1007px;height:16px;background:#f0f0f0"></div>
<svg class="a" style="left:512px;top:705px" width="8" height="9"><path d="M6 1L1.8 4.5L6 8" fill="none" stroke="#505050" stroke-width="2"/></svg>
<svg class="a" style="left:1503px;top:705px" width="8" height="9"><path d="M1 1L5.2 4.5L1 8" fill="none" stroke="#505050" stroke-width="2"/></svg>
<div class="a" style="left:525px;top:702px;width:613px;height:15px;background:#cdcdcd"></div>
<div class="a" style="left:1515px;top:702px;width:17px;height:16px;background:#f0f0f0;border-top:1px solid #000;border-left:1px solid #000"></div>
<div class="a" style="left:503px;top:723px;width:51px;height:23px;background:#fff"></div>
<div class="t" style="left:511px;top:729px;transform:scaleX(0.916)">View</div>
<div class="a" style="left:554px;top:724px;width:110px;height:21px;border:1px solid #dcdcdc;background:#f0f0f0"></div>
<div class="t" style="left:559px;top:727px;transform:scaleX(0.903)">Referenced By (10)</div>
<div class="a" style="left:663px;top:724px;width:64px;height:21px;border:1px solid #dcdcdc;background:#f0f0f0"></div>
<div class="t" style="left:668px;top:727px;transform:scaleX(0.896)">Messages</div>
<div class="a" style="left:726px;top:724px;width:76px;height:21px;border:1px solid #dcdcdc;background:#f0f0f0"></div>
<div class="t" style="left:731px;top:727px;transform:scaleX(1.004)">Information</div>
<div class="a" style="left:801px;top:724px;width:73px;height:21px;border:1px solid #dcdcdc;background:#f0f0f0"></div>
<div class="t" style="left:806px;top:727px;transform:scaleX(0.953)">What's New</div>
<div class="a" style="left:1px;top:751px;width:1541px;height:1px;background:#dadada"></div>
<div class="t" style="left:7px;top:757px;transform:scaleX(0.938)">[00:22] Background Loader: finished</div>
</body></html>
